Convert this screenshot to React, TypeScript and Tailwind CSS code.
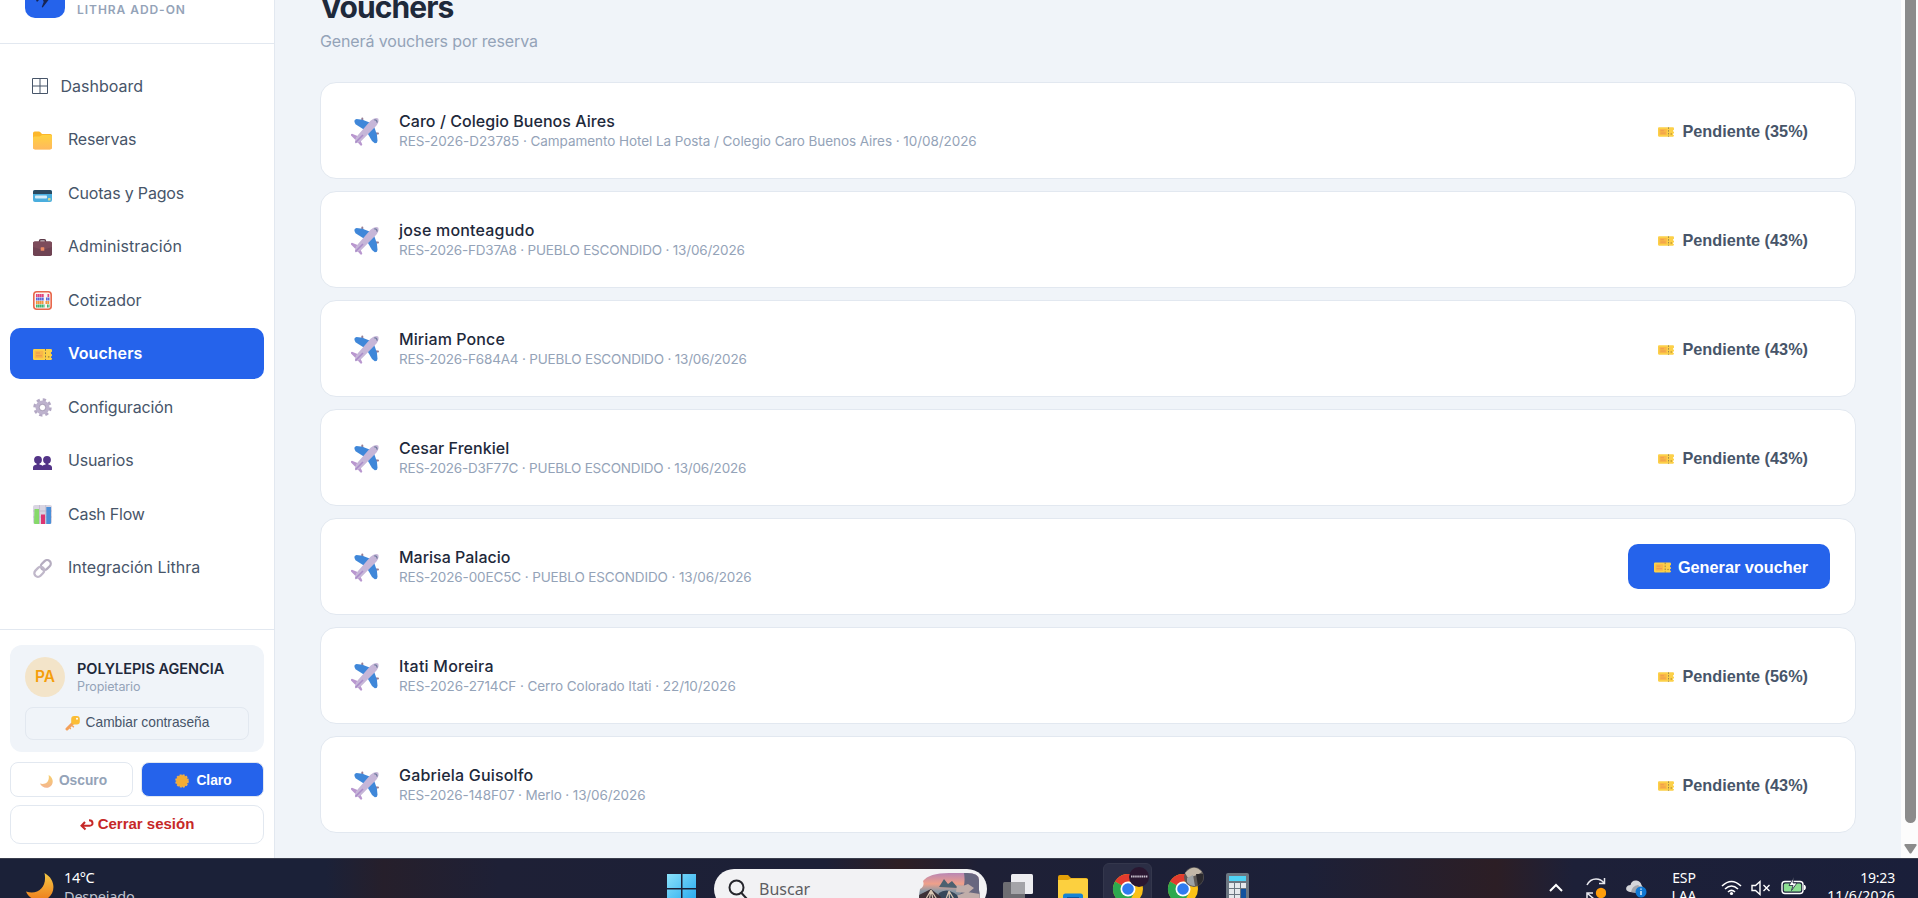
import type { ReactNode } from 'react'

const FolderIcon = () => (
  <svg width="19" height="19" viewBox="0 0 19 19">
    <defs>
      <linearGradient id="folder" x1="0" y1="0" x2="0" y2="1">
        <stop offset="0" stopColor="#ffd23f" />
        <stop offset="1" stopColor="#ffb95e" />
      </linearGradient>
    </defs>
    <path d="M0 2.2Q0 .5 1.7.5h4.2q.9 0 1.5.7L9 3h8.3Q19 3 19 4.700v11.600q0 2-2 2H2q-2 0-2-2z" fill="#fcb72b" />
    <path d="M0 7q0-1.500 1.500-1.500h5.200L9 4h8.500Q19 4 19 5.500v11q0 2-2 2H2q-2 0-2-2z" fill="url(#folder)" />
  </svg>
)

const CardIcon = () => (
  <svg width="19" height="19" viewBox="0 0 19 19">
    <rect y="6" width="19" height="12" rx="2" fill="#4aaede" />
    <path d="M0 8q0-2 2-2h15q2 0 2 2v2H0z" fill="#2a4a60" />
    <rect x="2" y="11.600" width="12" height="3" rx=".8" fill="#d6edf8" />
    <rect x="15" y="14" width="2.500" height="2.500" rx=".6" fill="#d8d98b" />
  </svg>
)

const BriefcaseIcon = () => (
  <svg width="19" height="19" viewBox="0 0 19 19">
    <path d="M6.500 4V3q0-1.200 1.200-1.200h3.600q1.200 0 1.200 1.200v1" fill="none" stroke="#5c3a48" strokeWidth="1.400" />
    <rect y="3.500" width="19" height="14.500" rx="1.800" fill="#6f4353" />
    <path d="M0 5.300Q0 3.500 1.800 3.500h15.400q1.800 0 1.800 1.800V9l-6.500 2h-6L0 9z" fill="#7d4c5b" />
    <rect x="7.700" y="9.200" width="3.600" height="3.600" rx=".6" fill="#ec8a63" />
  </svg>
)

const AbacusIcon = () => (
  <svg width="19" height="19" viewBox="0 0 19 19">
    <rect x=".8" y=".8" width="17.400" height="17.400" rx="3" fill="#fdf3f0" stroke="#e8684c" strokeWidth="1.600" />
    <g strokeWidth="2.800" strokeDasharray="1.700 .3">
      <path d="M3 4.500h8M14.500 4.500h2" stroke="#e0447c" />
      <path d="M3 8h8M13 8h3.500" stroke="#5a68d8" />
      <path d="M3 11.500h7.500M12.500 11.500h4" stroke="#ef9440" />
      <path d="M3 15h8.500M14 15h2.500" stroke="#3fb573" />
    </g>
  </svg>
)

const TicketIcon = ({ size = 19 }: { size?: number }) => (
  <svg width={size} height={size} viewBox="0 0 19 19" className="shrink-0">
    <path d="M1.200 4h16.600Q19 4 19 5.200v1.600q-1.200.3-1.200 1.300t1.200 1.300v1.500q-1.200.2-1.200 1.200T19 13.300v.5q0 1.200-1.200 1.200H1.200Q0 15 0 13.800V5.200Q0 4 1.200 4z" fill="#fcd048" />
    <rect x="1.700" y="5.800" width="8.600" height="7.400" rx=".8" fill="#f9b748" />
    <path d="M3 8h4M3 10.800h6" stroke="#ea9450" />
    <path d="M12.500 4v11" stroke="#85764e" strokeWidth="1" strokeDasharray="1.800 1.500" />
    <circle cx="15.700" cy="11.800" r=".9" fill="#b08d35" />
  </svg>
)

const GearIcon = () => (
  <svg width="19" height="19" viewBox="0 0 19 19">
    <circle cx="9.500" cy="9.500" r="7.700" fill="none" stroke="#b3a8c4" strokeWidth="3" strokeDasharray="3.200 2.848" />
    <circle cx="9.500" cy="9.500" r="5" fill="none" stroke="#bdb2cd" strokeWidth="4" />
    <circle cx="9.500" cy="9.500" r="3.200" fill="none" stroke="#978ca6" strokeWidth=".7" />
  </svg>
)

const UsersIcon = () => (
  <svg width="19" height="19" viewBox="0 0 19 19" fill="#533487">
    <circle cx="5" cy="7.800" r="3.900" />
    <circle cx="14" cy="7.800" r="3.900" />
    <path d="M0 18v-2.500Q0 13 3.700 12.500V10h2.700v2.500q2.300.3 3.100 1.300.8-1 3.100-1.300V10h2.700v2.500q3.700.5 3.700 3V18z" />
  </svg>
)

const ChartIcon = () => (
  <svg width="19" height="19" viewBox="0 0 19 19">
    <rect width="19" height="19" rx="2" fill="#d9d5e2" />
    <path d="M0 6h19M0 12h19M6.500 0v19M12.700 0v19" stroke="#bbb4c9" strokeWidth=".7" />
    <path d="M1.500 4H6v15H2q-1 0-1-1z" fill="#86d96a" />
    <path d="M8 9.500h4V19H8z" fill="#dc3571" />
    <path d="M13.300 2H18v16q0 1-1 1h-3.700z" fill="#4a8fd8" />
  </svg>
)

const LinkIcon = () => (
  <svg width="19" height="19" viewBox="0 0 19 19" fill="none" strokeWidth="2.300">
    <rect x="-5.500" y="-3.600" width="11" height="7.200" rx="3.600" transform="translate(12.800 6) rotate(-45)" stroke="#b5adc0" />
    <rect x="-5.500" y="-3.600" width="11" height="7.200" rx="3.600" transform="translate(6.300 12.800) rotate(-45)" stroke="#c0b8ca" />
  </svg>
)

const PlaneIcon = () => (
  <svg width="30" height="30" viewBox="0 0 30 30" className="shrink-0">
    <path d="M12.300 2.500v4M28 17.500h-4" stroke="#9a7f93" strokeWidth="2" strokeLinecap="round" />
    <path d="M4.500 6Q4 3.500 6.500 3l6 .8 9 3.400-6.500 7-9.500-6z" fill="#3f87d9" />
    <path d="M24.800 27.200q2.700.2 2.700-2.500l-.6-6.200L23.500 9l-7 6.500 5.500 9.500z" fill="#3f87d9" />
    <path d="M7.500 20L2 17.700q-1.500.3-1 1.800L5.500 24zM10 23.500l2.300 5q-.3 1.500-1.800 1L6.500 25z" fill="#b997cf" />
    <path d="M28.200 2.500q1.400 2.800-1.700 7L13 23.300q-3.500 3.700-8 4-.5-4.500 3-8.300L20.500 4.700q4.500-3.900 7.700-2.200z" fill="#c6b6d8" />
    <path d="M13 19L5.500 26.500" stroke="#aa8cc9" strokeWidth="1.600" />
    <path d="M24.200 4q2.400-.8 3 2.600" stroke="#6d7a9c" strokeWidth="1.200" fill="none" />
  </svg>
)

const KeyIcon = () => (
  <svg width="15" height="15" viewBox="0 0 15 15">
    <path d="M8 7L2 13" stroke="#f3a05a" strokeWidth="3" strokeLinecap="round" />
    <path d="M7.200 9.500l1.600 1.700M4.800 12l1 1" stroke="#f4a456" strokeWidth="1.400" />
    <rect x="6.200" y="0" width="8.600" height="8.600" rx="3" fill="#fbbd35" />
    <circle cx="12" cy="2.800" r="1" fill="#fff" />
  </svg>
)

const MoonIcon = ({ size, id, from, to }: { size: number; id: string; from: string; to: string }) => (
  <svg width={size} height={size} viewBox="0 0 28 28" className="shrink-0">
    <defs>
      <linearGradient id={id} x1="0" y1="0" x2="0" y2="1">
        <stop offset="0" stopColor={from} />
        <stop offset="1" stopColor={to} />
      </linearGradient>
    </defs>
    <path d="M18.500 0C31 7 29.500 22 19.500 26.500 12 29.500 3 26 0 18.500 12 22.500 21.500 14 18.500 0z" fill={`url(#${id})`} />
  </svg>
)

const SunIcon = () => (
  <svg width="14" height="14" viewBox="0 0 14 14">
    <circle cx="7" cy="7" r="6" fill="#eda53a" stroke="#eeb04d" strokeWidth="1.600" strokeDasharray="2 1.140" />
    <circle cx="7" cy="7" r="5.200" fill="#f3ac34" />
  </svg>
)

const GridIcon = () => (
  <svg width="16" height="16" viewBox="0 0 16 16" fill="none" stroke="#475569">
    <path d="M.5.500h15v15H.5zM8 .500v15M.5 8h15" />
  </svg>
)

type NavEntry = { label: string; icon: ReactNode; tracking: string; active?: boolean }

const nav: NavEntry[] = [
  { label: 'Reservas', icon: <FolderIcon />, tracking: 'tracking-[-0.200px]' },
  { label: 'Cuotas y Pagos', icon: <CardIcon />, tracking: 'tracking-[-0.180px]' },
  { label: 'Administración', icon: <BriefcaseIcon />, tracking: 'tracking-[0.080px]' },
  { label: 'Cotizador', icon: <AbacusIcon />, tracking: 'tracking-normal' },
  { label: 'Vouchers', icon: <TicketIcon />, tracking: 'tracking-[0.050px]', active: true },
  { label: 'Configuración', icon: <GearIcon />, tracking: 'tracking-[-0.140px]' },
  { label: 'Usuarios', icon: <UsersIcon />, tracking: 'tracking-[-0.200px]' },
  { label: 'Cash Flow', icon: <ChartIcon />, tracking: 'tracking-[-0.250px]' },
  { label: 'Integración Lithra', icon: <LinkIcon />, tracking: 'tracking-normal' },
]

const bookings = [
  { name: 'Caro / Colegio Buenos Aires', detail: 'RES-2026-D23785 · Campamento Hotel La Posta / Colegio Caro Buenos Aires · 10/08/2026', pct: 35, nameCls: 'tracking-[0.050px]', detailCls: 'tracking-[-0.060px]' },
  { name: 'jose monteagudo', detail: 'RES-2026-FD37A8 · PUEBLO ESCONDIDO · 13/06/2026', pct: 43, nameCls: 'tracking-[0.200px]', detailCls: 'tracking-[-0.200px]' },
  { name: 'Miriam Ponce', detail: 'RES-2026-F684A4 · PUEBLO ESCONDIDO · 13/06/2026', pct: 43, nameCls: 'tracking-[0.100px]', detailCls: 'tracking-[-0.190px]' },
  { name: 'Cesar Frenkiel', detail: 'RES-2026-D3F77C · PUEBLO ESCONDIDO · 13/06/2026', pct: 43, nameCls: 'tracking-[0.050px]', detailCls: 'tracking-[-0.200px]' },
  { name: 'Marisa Palacio', detail: 'RES-2026-00EC5C · PUEBLO ESCONDIDO · 13/06/2026', pct: 100, nameCls: 'tracking-normal', detailCls: 'tracking-[-0.120px]' },
  { name: 'Itati Moreira', detail: 'RES-2026-2714CF · Cerro Colorado Itati · 22/10/2026', pct: 56, nameCls: 'tracking-[0.230px]', detailCls: 'tracking-[-0.070px]' },
  { name: 'Gabriela Guisolfo', detail: 'RES-2026-148F07 · Merlo · 13/06/2026', pct: 43, nameCls: 'tracking-[0.180px]', detailCls: 'tracking-[-0.120px]' },
]

function Sidebar() {
  return (
    <aside className="w-[275px] shrink-0 bg-white border-r border-[#e2e8f0] flex flex-col">
      <div className="h-11 shrink-0 border-b border-[#e2e8f0] flex items-start pl-[25px] gap-3 overflow-hidden">
        <div className="w-10 h-[18px] rounded-b-[10px] bg-[#2563eb]">
          <svg width="40" height="18" viewBox="0 0 40 18" fill="#172554">
            <path d="M11 0h3l-2 2zM18 0h5.500l-5.800 7.500-1-.4L18.700 2z" />
          </svg>
        </div>
        <span className="text-[12px] leading-[20px] font-semibold tracking-[0.950px] text-[#94a3b8]">LITHRA ADD-ON</span>
      </div>

      <nav className="flex flex-col gap-[2.500px] px-2.5 pt-4 text-[16px] text-[#475569] grow">
        <a className="h-[51px] flex items-center pl-[21.500px] gap-[13px]">
          <GridIcon />
          <span>Dashboard</span>
        </a>
        {nav.map((n) => (
          <a
            key={n.label}
            className={`h-[51px] flex items-center pl-[23px] gap-4 rounded-[10px] ${n.active ? 'bg-[#2563eb] text-white font-semibold' : ''}`}
          >
            <span className="mt-[2px]">{n.icon}</span>
            <span className={n.tracking}>{n.label}</span>
          </a>
        ))}
      </nav>

      <div className="border-t border-[#e2e8f0] px-2.5 pt-[15px] h-[229px] shrink-0">
        <div className="h-[107px] rounded-xl bg-[#f0f4f9] px-[15px] pt-3">
          <div className="flex items-center gap-3">
            <div className="size-10 rounded-full bg-[#f3e4c9] text-[#f59e0b] text-[15.500px] font-semibold flex items-center justify-center">PA</div>
            <div>
              <div className="text-[14.500px] leading-[19px] font-semibold text-[#1e293b] whitespace-nowrap">POLYLEPIS AGENCIA</div>
              <div className="text-[12.500px] leading-[17px] text-[#94a3b8] tracking-[-0.100px]">Propietario</div>
            </div>
          </div>
          <button className="mt-2.5 w-full h-[33px] rounded-lg border border-[#e2e8f0] flex items-center justify-center gap-[6px] font-[Liberation_Sans,sans-serif] text-[13.750px] text-[#475569]">
            <KeyIcon />
            Cambiar contraseña
          </button>
        </div>
        <div className="flex gap-2 mt-2.5 font-[Liberation_Sans,sans-serif] text-[13.750px] font-bold">
          <button className="w-[123px] h-[35px] rounded-lg border border-[#e2e8f0] text-[#94a3b8] flex items-center justify-center gap-[6px] pl-1 pt-[3px]">
            <MoonIcon size={13} id="moon-sm" from="#f7cf6a" to="#f4b590" />
            Oscuro
          </button>
          <button className="w-[123px] h-[35px] rounded-lg border border-[#e2e8f0] bg-[#2563eb] text-white flex items-center justify-center gap-[7px] pl-[2px] pt-[3px]">
            <SunIcon />
            Claro
          </button>
        </div>
        <button className="mt-2 w-full h-[39px] rounded-[10px] border border-[#e2e8f0] text-[#c62828] font-[Liberation_Sans,sans-serif] text-[15px] font-bold flex items-center justify-center gap-1">
          <svg width="14" height="12" viewBox="0 0 14 12" fill="none" stroke="#c62828" strokeWidth="2">
            <path d="M5 3L1.500 6.800 5.500 10.500M2 6.800h7.500Q12.800 6.500 12.500 3.800 12.300 1.300 9 1.300" />
          </svg>
          Cerrar sesión
        </button>
      </div>
    </aside>
  )
}

function Vouchers() {
  return (
    <main className="grow bg-[#f0f4f9] pl-[45px] pr-[45px]">
      <h1 className="-mt-[13px] text-[30px] leading-[40px] font-bold tracking-[-0.950px] text-[#1e293b]">Vouchers</h1>
      <p className="mt-[3px] text-[16px] leading-[22px] tracking-[-0.120px] text-[#94a3b8]">Generá vouchers por reserva</p>
      <div className="mt-[30px] flex flex-col gap-3">
        {bookings.map((b) => (
          <div key={b.name} className="h-[97px] bg-white rounded-2xl border border-[#e2e8f0] flex items-center pl-[29px] pr-[25px]">
            <PlaneIcon />
            <div className="ml-[19px] grow">
              <div className={`text-[16px] leading-[20px] font-medium text-[#1e293b] ${b.nameCls}`}>{b.name}</div>
              <div className={`text-[13.500px] leading-[20px] text-[#94a3b8] ${b.detailCls}`}>{b.detail}</div>
            </div>
            {b.pct === 100 ? (
              <button className="h-[45px] w-[202px] rounded-[10px] bg-[#2563eb] text-white font-[Liberation_Sans,sans-serif] text-[16.250px] font-bold flex items-center justify-end gap-[7px] pr-[22px] pt-[2px]">
                <TicketIcon size={17} />
                Generar voucher
              </button>
            ) : (
              <button className="h-[45px] text-[#475569] font-[Liberation_Sans,sans-serif] text-[16.250px] font-bold flex items-center gap-2 pr-[22px] pt-[2px]">
                <TicketIcon size={16} />
                Pendiente ({b.pct}%)
              </button>
            )}
          </div>
        ))}
      </div>
    </main>
  )
}

function Scrollbar() {
  return (
    <div className="w-[17px] shrink-0 bg-[#fcfcfc] flex flex-col items-center justify-between pb-1">
      <div className="w-[11px] h-[823px] ml-0.5 rounded-b-full bg-[#8b8b8b]" />
      <svg width="13" height="10" viewBox="0 0 13 10" className="ml-0.5" fill="#8b8b8b">
        <path d="M1 0h11q1 .6.500 1.500L7.500 9q-1 1.200-2 0L.5 1.500Q0 .600 1 0z" />
      </svg>
    </div>
  )
}

const Chrome = ({ badge }: { badge: ReactNode }) => (
  <svg width="49" height="40" viewBox="0 0 49 40">
    <circle cx="25" cy="30" r="15" fill="#fbc116" />
    <path d="M25 30L12 22.500A15 15 0 0 1 38 22.500H25z" fill="#e33b2e" />
    <path d="M25 30L12 22.500A15 15 0 0 0 25 45l6-11z" fill="#2da94f" />
    <circle cx="25" cy="30" r="7.500" fill="#fff" />
    <circle cx="25" cy="30" r="5.800" fill="#2f7bf0" />
    {badge}
  </svg>
)

function Taskbar() {
  return (
    <footer className="h-10 shrink-0 overflow-hidden flex items-start border-t border-[#3a3e4d] text-white font-[Noto_Sans,sans-serif] bg-[linear-gradient(90deg,#1b2138_0%,#1b2138_17%,#261f2b_20%,#1e2036_26%,#1c2037_43%,#2e1f24_47%,#1e2036_51%,#1c2038_68%,#2c1e25_78%,#1d2038_82%,#1a1f3a_100%)]">
      <div className="w-[667px] flex pl-[26px] pt-[14px] gap-[10px]">
        <MoonIcon size={28} id="moon-lg" from="#f5c945" to="#ee7d1b" />
        <div className="text-[14.500px] leading-[20px] -mt-[6px] tracking-[-0.400px]">
          <div>14°C</div>
          <div className="text-[#bfc3cf] -mt-px tracking-[-0.200px]">Despejado</div>
        </div>
      </div>

      <div className="flex items-start">
        <svg width="29" height="40" viewBox="0 0 29 40">
          <defs>
            <linearGradient id="win" x1="0" y1="0" x2="1" y2="1">
              <stop offset="0" stopColor="#8be2fb" />
              <stop offset="1" stopColor="#22a7ee" />
            </linearGradient>
          </defs>
          <path d="M0 15h14v14H0zM15.500 15H29v14H15.500zM0 30.500h14V44H0zM15.500 30.500H29V44H15.500z" fill="url(#win)" />
        </svg>
        <div className="ml-[18px] mt-[10px] w-[273px] h-10 rounded-full bg-[#f2f2f4] flex items-center pl-[14px] pr-[7px] text-[#5d5d61]">
          <svg width="20" height="21" viewBox="0 0 20 21" fill="none" stroke="#26262c" strokeWidth="2">
            <circle cx="8.500" cy="8.500" r="7" />
            <path d="M13.500 14l5 5.500" strokeLinecap="round" />
          </svg>
          <span className="ml-[11px] text-[16px] leading-5 -mt-px">Buscar</span>
          <svg width="61" height="36" viewBox="0 0 61 36" className="ml-auto mt-[4px]">
            <defs>
              <linearGradient id="sky" x1="0" y1="0" x2="0" y2="1">
                <stop offset="0" stopColor="#b987b4" />
                <stop offset=".3" stopColor="#f0a08a" />
                <stop offset=".5" stopColor="#8d9aa6" />
                <stop offset="1" stopColor="#4a5468" />
              </linearGradient>
              <clipPath id="blob">
                <path d="M4 8Q10 0 30 0h18q12 0 12 7v10q2 10-1 19H1q-2-12 0-20 5-3 3-8z" />
              </clipPath>
            </defs>
            <g clipPath="url(#blob)">
              <path d="M0 0h61v36H0z" fill="url(#sky)" />
              <path d="M20 14l5-8 4 5 4-3 6 7z" fill="#4c6170" />
              <path d="M45 0h16v36H40q-4-12 2-16 5-8 3-20z" fill="#68677f" />
              <path d="M38 12q6 2 11-1l6 4-6 5-12-1zM34 24l14-5 13 2v6l-22 4z" fill="#c0ada9" />
              <path d="M20 20q8-6 18 2l6 14H14z" fill="#37485a" />
              <path d="M0 22l12-6 10 8 4 12H0z" fill="#3c3137" />
              <path d="M12 17L3 33M12 17L9 35M12 17l4 18M12 17l10 16M30 18l-6 16M30 18l1 17M30 18l9 15" stroke="#d8c6b2" strokeWidth="1.200" />
            </g>
          </svg>
        </div>
        <svg width="30" height="40" viewBox="0 0 30 40" className="ml-4">
          <rect x="8" y="15" width="22" height="20" rx="1.500" fill="#ededf0" />
          <rect x="0" y="23" width="22" height="20" rx="1.500" fill="#6d6d72" />
          <path d="M8 23h14v12H8z" fill="#a4a4a8" />
        </svg>
        <svg width="30" height="40" viewBox="0 0 30 40" className="ml-[25px]">
          <path d="M0 18q0-2 2-2h8l3 3h15q2 0 2 2v19H0z" fill="#e3a008" />
          <path d="M0 21h10l3-1.500h15q2 0 2 1.500v19H0z" fill="#fcd03f" />
          <path d="M5 37q0-2.500 2.500-2.500h15q2.500 0 2.500 2.500v4H5z" fill="#1683d3" />
          <path d="M9 38h12v3H9z" fill="#0a539b" />
        </svg>
        <div className="ml-[15px] mt-1 h-10 w-[49px] rounded-md bg-[#2b2e45] border border-[#34374c]">
          <div className="-mt-[5px] -ml-px">
            <Chrome
              badge={
                <>
                  <circle cx="36" cy="18" r="10" fill="#2a1731" />
                  <path d="M28 17.500h17" stroke="#c9c2cf" strokeWidth="2" strokeDasharray="1.500 .600" />
                </>
              }
            />
          </div>
        </div>
        <div className="ml-[6px]">
          <Chrome
            badge={
              <>
                <circle cx="36" cy="18" r="10" fill="#5e5a58" />
                <path d="M27 14q9-10 17-1l-5 3-9 3z" fill="#c2b8a8" />
                <path d="M29 19l6-3 2 11q-6 0-8-4z" fill="#9da2a4" />
                <path d="M38 15l7 0q2 7-5 12z" fill="#2b2a2e" />
              </>
            }
          />
        </div>
        <svg width="23" height="40" viewBox="0 0 23 40" className="ml-[19px]">
          <rect y="14" width="23" height="32" rx="2" fill="#6b7681" />
          <rect x="3" y="17" width="17" height="5" fill="#4fd3f5" />
          <path d="M3 24h5v5H3zM9 24h5v5H9zM15 24h5v5h-5zM3 30h5v5H3zM9 30h5v5H9zM3 36h5v5H3zM9 36h5v5H9z" fill="#e4e8ec" />
          <path d="M15 30h5v10h-5z" fill="#12529e" />
        </svg>
      </div>

      <div className="ml-[300px] flex items-start">
        <svg width="14" height="40" viewBox="0 0 14 40" fill="none" stroke="#fff" strokeWidth="2">
          <path d="M1 32l6-6 6 6" />
        </svg>
        <svg width="20" height="40" viewBox="0 0 20 40" className="ml-[23px]" fill="none" stroke="#e8e8ee" strokeWidth="1.500">
          <path d="M1 26q3-6 9-6 5 0 8 4M18.500 19v5.500H13M1 40v-6h6M1 34l7 6" />
          <circle cx="15" cy="34" r="5.200" fill="#ff9d0a" stroke="none" />
        </svg>
        <svg width="21" height="40" viewBox="0 0 21 40" className="ml-5">
          <path d="M4 33q-5-1-3.500-5 1-2 4-2 1-5 6-4.500 4 .5 5 4.500l3 5-6 3z" fill="#d5d6da" />
          <path d="M5 33q1-6 7-7l4 3-4 5z" fill="#a3a5ac" />
          <circle cx="15" cy="33" r="5.500" fill="#0f78d4" />
          <path d="M15 32v4M15 29.500v1.300" stroke="#fff" strokeWidth="1.300" />
        </svg>
        <div className="ml-[24px] mt-[10px] w-[26px] text-[14px] leading-[18px] text-center tracking-[-0.100px]">
          <div>ESP</div>
          <div>LAA</div>
        </div>
        <svg width="21" height="40" viewBox="0 0 21 40" className="ml-[24px]" fill="none" stroke="#fff" strokeWidth="1.600">
          <path d="M1 27q9.500-9 19 0M4 30q6.500-6 13 0M7 33q3.500-3.200 7 0" />
          <circle cx="10.500" cy="34.500" r="1.600" fill="#fff" stroke="none" />
        </svg>
        <svg width="20" height="40" viewBox="0 0 20 40" className="ml-[9px]" fill="none" stroke="#fff" strokeWidth="1.400">
          <path d="M1 26.500h3.500l4.500-4v13l-4.500-4H1zM12.500 26l6 6M18.500 26l-6 6" />
        </svg>
        <svg width="26" height="40" viewBox="0 0 26 40" className="ml-[10px]">
          <rect x="1" y="22.500" width="21" height="12" rx="3" fill="none" stroke="#fff" strokeWidth="1.400" />
          <rect x="2.800" y="24.500" width="17.400" height="8" rx="1.500" fill="#8ddf92" />
          <path d="M23.500 26q2 2.500 0 5z" fill="#fff" stroke="#fff" />
          <path d="M13 18l-5 8.500h4l-1.500 5 5.500-7.500h-4z" fill="#fff" stroke="#1b1f39" strokeWidth=".8" />
        </svg>
        <div className="w-[88px] mt-[9px] text-[14px] leading-[19px] text-right whitespace-nowrap">
          <div className="tracking-[-0.200px]">19:23</div>
          <div className="-mt-px tracking-[0.150px]">11/6/2026</div>
        </div>
      </div>
    </footer>
  )
}

export default function App() {
  return (
    <div className="w-[1918px] h-[898px] overflow-hidden flex flex-col font-[Inter,sans-serif]">
      <div className="h-[858px] flex overflow-hidden">
        <Sidebar />
        <Vouchers />
        <Scrollbar />
      </div>
      <Taskbar />
    </div>
  )
}
